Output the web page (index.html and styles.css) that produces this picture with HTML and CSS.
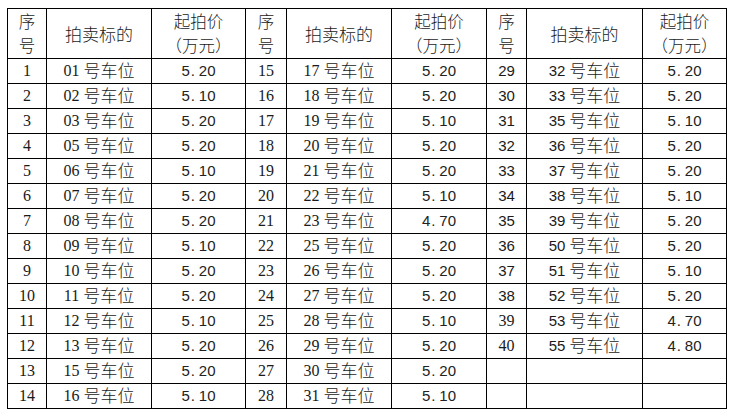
FILE: index.html
```html
<!DOCTYPE html>
<html lang="zh-CN">
<head>
<meta charset="utf-8">
<title>拍卖标的</title>
<link rel="stylesheet" href="styles.css">
</head>
<body>
<div class="sheet">
  <div class="c hd two">序<br>号</div>
  <div class="c hd one">拍卖标的</div>
  <div class="c hd two">起拍价<br>（万元）</div>
  <div class="c hd two">序<br>号</div>
  <div class="c hd one">拍卖标的</div>
  <div class="c hd two">起拍价<br>（万元）</div>
  <div class="c hd two">序<br>号</div>
  <div class="c hd one">拍卖标的</div>
  <div class="c hd two">起拍价<br>（万元）</div>

  <div class="c">1</div><div class="c">01 <span class="zh">号车位</span></div><div class="c pr">5<span class="pt">.</span>20</div>
  <div class="c">15</div><div class="c">17 <span class="zh">号车位</span></div><div class="c pr">5<span class="pt">.</span>20</div>
  <div class="c sans">29</div><div class="c"><span class="sans">32</span> <span class="zh">号车位</span></div><div class="c pr">5<span class="pt">.</span>20</div>

  <div class="c">2</div><div class="c">02 <span class="zh">号车位</span></div><div class="c pr">5<span class="pt">.</span>10</div>
  <div class="c">16</div><div class="c">18 <span class="zh">号车位</span></div><div class="c pr">5<span class="pt">.</span>20</div>
  <div class="c sans">30</div><div class="c"><span class="sans">33</span> <span class="zh">号车位</span></div><div class="c pr">5<span class="pt">.</span>20</div>

  <div class="c">3</div><div class="c">03 <span class="zh">号车位</span></div><div class="c pr">5<span class="pt">.</span>20</div>
  <div class="c">17</div><div class="c">19 <span class="zh">号车位</span></div><div class="c pr">5<span class="pt">.</span>10</div>
  <div class="c sans">31</div><div class="c"><span class="sans">35</span> <span class="zh">号车位</span></div><div class="c pr">5<span class="pt">.</span>10</div>

  <div class="c">4</div><div class="c">05 <span class="zh">号车位</span></div><div class="c pr">5<span class="pt">.</span>20</div>
  <div class="c">18</div><div class="c">20 <span class="zh">号车位</span></div><div class="c pr">5<span class="pt">.</span>20</div>
  <div class="c sans">32</div><div class="c"><span class="sans">36</span> <span class="zh">号车位</span></div><div class="c pr">5<span class="pt">.</span>20</div>

  <div class="c">5</div><div class="c">06 <span class="zh">号车位</span></div><div class="c pr">5<span class="pt">.</span>10</div>
  <div class="c">19</div><div class="c">21 <span class="zh">号车位</span></div><div class="c pr">5<span class="pt">.</span>20</div>
  <div class="c sans">33</div><div class="c"><span class="sans">37</span> <span class="zh">号车位</span></div><div class="c pr">5<span class="pt">.</span>20</div>

  <div class="c">6</div><div class="c">07 <span class="zh">号车位</span></div><div class="c pr">5<span class="pt">.</span>20</div>
  <div class="c">20</div><div class="c">22 <span class="zh">号车位</span></div><div class="c pr">5<span class="pt">.</span>10</div>
  <div class="c sans">34</div><div class="c"><span class="sans">38</span> <span class="zh">号车位</span></div><div class="c pr">5<span class="pt">.</span>10</div>

  <div class="c">7</div><div class="c">08 <span class="zh">号车位</span></div><div class="c pr">5<span class="pt">.</span>20</div>
  <div class="c">21</div><div class="c">23 <span class="zh">号车位</span></div><div class="c pr">4<span class="pt">.</span>70</div>
  <div class="c sans">35</div><div class="c"><span class="sans">39</span> <span class="zh">号车位</span></div><div class="c pr">5<span class="pt">.</span>20</div>

  <div class="c">8</div><div class="c">09 <span class="zh">号车位</span></div><div class="c pr">5<span class="pt">.</span>10</div>
  <div class="c">22</div><div class="c">25 <span class="zh">号车位</span></div><div class="c pr">5<span class="pt">.</span>20</div>
  <div class="c sans">36</div><div class="c"><span class="sans">50</span> <span class="zh">号车位</span></div><div class="c pr">5<span class="pt">.</span>20</div>

  <div class="c">9</div><div class="c">10 <span class="zh">号车位</span></div><div class="c pr">5<span class="pt">.</span>20</div>
  <div class="c">23</div><div class="c">26 <span class="zh">号车位</span></div><div class="c pr">5<span class="pt">.</span>20</div>
  <div class="c sans">37</div><div class="c"><span class="sans">51</span> <span class="zh">号车位</span></div><div class="c pr">5<span class="pt">.</span>10</div>

  <div class="c">10</div><div class="c">11 <span class="zh">号车位</span></div><div class="c pr">5<span class="pt">.</span>20</div>
  <div class="c">24</div><div class="c">27 <span class="zh">号车位</span></div><div class="c pr">5<span class="pt">.</span>20</div>
  <div class="c sans">38</div><div class="c"><span class="sans">52</span> <span class="zh">号车位</span></div><div class="c pr">5<span class="pt">.</span>20</div>

  <div class="c">11</div><div class="c">12 <span class="zh">号车位</span></div><div class="c pr">5<span class="pt">.</span>10</div>
  <div class="c">25</div><div class="c">28 <span class="zh">号车位</span></div><div class="c pr">5<span class="pt">.</span>10</div>
  <div class="c">39</div><div class="c"><span class="sans">53</span> <span class="zh">号车位</span></div><div class="c pr">4<span class="pt">.</span>70</div>

  <div class="c">12</div><div class="c">13 <span class="zh">号车位</span></div><div class="c pr">5<span class="pt">.</span>20</div>
  <div class="c">26</div><div class="c">29 <span class="zh">号车位</span></div><div class="c pr">5<span class="pt">.</span>20</div>
  <div class="c">40</div><div class="c"><span class="sans">55</span> <span class="zh">号车位</span></div><div class="c pr">4<span class="pt">.</span>80</div>

  <div class="c">13</div><div class="c">15 <span class="zh">号车位</span></div><div class="c pr">5<span class="pt">.</span>20</div>
  <div class="c">27</div><div class="c">30 <span class="zh">号车位</span></div><div class="c pr">5<span class="pt">.</span>20</div>
  <div class="c"></div><div class="c"></div><div class="c"></div>

  <div class="c">14</div><div class="c">16 <span class="zh">号车位</span></div><div class="c pr">5<span class="pt">.</span>10</div>
  <div class="c">28</div><div class="c">31 <span class="zh">号车位</span></div><div class="c pr">5<span class="pt">.</span>10</div>
  <div class="c"></div><div class="c"></div><div class="c"></div>
</div>
</body>
</html>
```

FILE: styles.css
```css
html, body {
  margin: 0;
  background: #ffffff;
}

.sheet {
  display: grid;
  grid-template-columns: 39px 105px 94px 41px 105px 95px 40px 116px 84px;
  grid-template-rows: 50px repeat(14, 25px);
  width: max-content;
  margin: 8px 0 0 7px;
  border-left: 1px solid #000;
  border-top: 1px solid #000;
  font-family: "Liberation Serif", "Noto Sans CJK SC", serif;
  font-size: 16px;
  font-weight: 300;
  color: #1a1a1a;
}

.c {
  box-sizing: border-box;
  border-right: 1px solid #000;
  border-bottom: 1px solid #000;
  text-align: center;
  white-space: nowrap;
  line-height: 24px;
}

.zh {
  font-family: "Noto Sans CJK SC", sans-serif;
  font-size: 17px;
  line-height: 1;
  vertical-align: -1px;
}

.hd {
  font-family: "Noto Sans CJK SC", sans-serif;
  font-size: 17px;
}

.hd.one {
  line-height: 49px;
}

.hd.two {
  font-size: 16.5px;
  line-height: 24px;
  padding-top: 0;
}

.sans {
  font-family: "Liberation Sans", "Noto Sans CJK SC", sans-serif;
  font-size: 15px;
}

.pr {
  font-family: "Liberation Sans", sans-serif;
  font-size: 15px;
  color: #222;
}

.pt {
  display: inline-block;
  width: 9px;
  text-align: left;
  padding-left: 1px;
  box-sizing: border-box;
  line-height: 1;
}
```
